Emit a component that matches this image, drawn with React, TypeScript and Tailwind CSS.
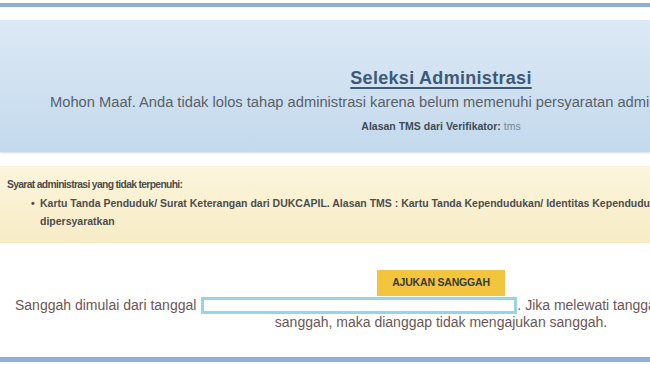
import React from 'react';

const App = () => {
  return (
    <div className="w-[650px] h-[365px] overflow-hidden bg-white flex flex-col font-['Liberation_Sans',Arial,sans-serif]">
      {/* top rule */}
      <div className="mt-[3px] h-[4px] bg-[#8eaed6] shrink-0" />

      {/* result panel */}
      <div className="mt-[13px] h-[132px] shrink-0 bg-gradient-to-b from-[#dde9f5] to-[#c3d9ed] shadow-[0_1px_2px_rgba(120,150,180,0.35)]">
        <div className="w-[882px] pt-[48px] flex flex-col">
          <h2 className="text-center text-[18px] leading-[21px] font-bold tracking-[0.3px] text-[#3d5a78] underline underline-offset-[3px] decoration-[1.5px]">
            Seleksi Administrasi
          </h2>
          <p className="mt-[5px] pl-[50px] whitespace-nowrap text-[14.7px] leading-[17px] text-[#59616b]">
            Mohon Maaf. Anda tidak lolos tahap administrasi karena belum memenuhi persyaratan administrasi.
          </p>
          <p className="mt-[9px] text-center text-[10.5px] leading-[12px] text-[#3f4a55]">
            <span className="font-bold">Alasan TMS dari Verifikator:</span>{' '}
            <span className="text-[#7b8590]">tms</span>
          </p>
        </div>
      </div>

      {/* missing requirements */}
      <div className="mt-[14px] h-[77px] shrink-0 bg-gradient-to-b from-[#fcf5dc] to-[#f7ecc6] pt-[10px] text-[10.5px] leading-[18px] font-bold text-[#4d4d4d] whitespace-nowrap">
        <p className="pl-[7px] text-[10.3px] tracking-[-0.65px]">Syarat administrasi yang tidak terpenuhi:</p>
        <div className="flex pl-[31px]">
          <span className="w-[9px] shrink-0">•</span>
          <p>
            Kartu Tanda Penduduk/ Surat Keterangan dari DUKCAPIL. Alasan TMS : Kartu Tanda Kependudukan/ Identitas Kependudukan tidak sesuai dengan yang
            <br />
            dipersyaratkan
          </p>
        </div>
      </div>

      {/* sanggah */}
      <div className="w-[882px] mt-[27px] flex flex-col items-center">
        <button className="w-[128px] h-[26px] bg-[#f2c53d] text-[#3a3a3a] text-[10.5px] font-bold tracking-[-0.2px]">
          AJUKAN SANGGAH
        </button>
      </div>
      <div className="w-[882px] mt-[1px] text-[14px] leading-[17px] text-[#6d5656] whitespace-nowrap">
        <p className="pl-[15px] flex items-center">
          <span className="shrink-0">Sanggah dimulai dari tanggal</span>
          <span className="inline-block shrink-0 ml-[5px] w-[316px] h-[17px] border-[3px] border-[#9ad3e2] bg-white" />
          <span className="shrink-0">. Jika melewati tanggal tersebut peserta tidak dapat mengajukan</span>
        </p>
        <p className="text-center">sanggah, maka dianggap tidak mengajukan sanggah.</p>
      </div>

      {/* bottom rule */}
      <div className="mt-auto mb-[3px] h-[5px] bg-[#8eaed6] shrink-0" />
    </div>
  );
};

export default App;
